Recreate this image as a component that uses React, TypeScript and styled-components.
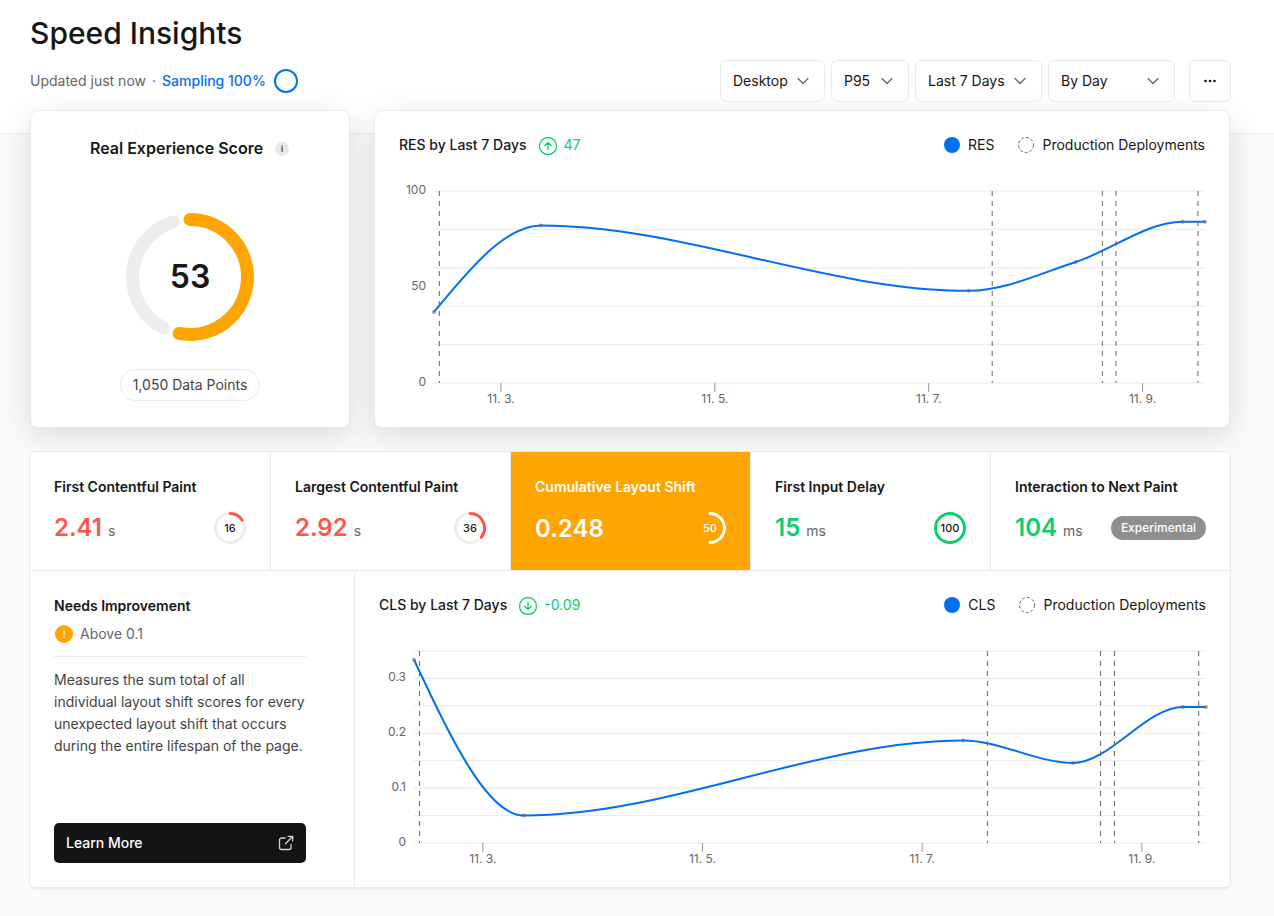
import React, { useLayoutEffect, useRef, useState } from "react";
import styled, { createGlobalStyle } from "styled-components";
import { ChevronDown } from "lucide-react";

const color = {
  text: "#171717",
  body: "#444444",
  muted: "#666666",
  line: "#eaeaea",
  track: "#ededed",
  page: "#fafafa",
  blue: "#0070f3",
  orange: "#ffa500",
  red: "#ff564a",
  green: "#0cce6b",
};

const GlobalStyle = createGlobalStyle`
  * { box-sizing: border-box; }
  body {
    margin: 0;
    background: ${color.page};
    color: ${color.text};
    font-family: Inter, "Liberation Sans", sans-serif;
    font-size: 14px;
    line-height: 20px;
    -webkit-font-smoothing: antialiased;
  }
  h1, h2, h3, p { margin: 0; }
  button, select { font: inherit; color: inherit; }
`;

/* ---------- data ---------- */

type Point = { day: number; value: number };

const SPAN_DAYS = 7.21;
const DEPLOYMENTS = [0.05, 5.22, 6.25, 6.377, 7.144];
const DATE_TICKS = [
  { day: 0.626, label: "11. 3." },
  { day: 2.626, label: "11. 5." },
  { day: 4.626, label: "11. 7." },
  { day: 6.626, label: "11. 9." },
];

const RES: Point[] = [
  { day: 0, value: 37 },
  { day: 1, value: 82 },
  { day: 5, value: 48 },
  { day: 6, value: 63 },
  { day: 7, value: 84 },
  { day: 7.21, value: 84 },
];

const CLS: Point[] = [
  { day: 0, value: 0.334 },
  { day: 1, value: 0.05 },
  { day: 5, value: 0.187 },
  { day: 6, value: 0.146 },
  { day: 7, value: 0.248 },
  { day: 7.21, value: 0.248 },
];

/* ---------- gauge ---------- */

function polar(c: number, r: number, deg: number) {
  const a = ((deg - 90) * Math.PI) / 180;
  return `${(c + r * Math.cos(a)).toFixed(2)} ${(c + r * Math.sin(a)).toFixed(2)}`;
}

function arc(c: number, r: number, from: number, to: number) {
  return `M${polar(c, r, from)}A${r} ${r} 0 ${to - from > 180 ? 1 : 0} 1 ${polar(c, r, to)}`;
}

const GaugeBox = styled.span<{ $size: number }>`
  position: relative;
  display: grid;
  place-items: center;
  flex: none;
  width: ${(p) => p.$size}px;
  height: ${(p) => p.$size}px;
  svg {
    position: absolute;
    inset: 0;
  }
`;

const GaugeValue = styled.span<{ $large?: boolean }>`
  font-size: ${(p) => (p.$large ? 32 : 11)}px;
  font-weight: ${(p) => (p.$large ? 600 : 500)};
  line-height: 1;
`;

type GaugeProps = {
  value: number;
  size: number;
  stroke: number;
  tone: string;
  track?: string;
  large?: boolean;
};

function Gauge({ value, size, stroke, tone, track = color.track, large }: GaugeProps) {
  const c = size / 2;
  const r = (size - stroke) / 2;
  const end = value * 3.6;
  const gap = 17;
  return (
    <GaugeBox $size={size}>
      <svg width={size} height={size} fill="none" strokeWidth={stroke} strokeLinecap="round" aria-hidden>
        {value >= 100 ? (
          <circle cx={c} cy={c} r={r} stroke={tone} />
        ) : (
          <>
            <path d={arc(c, r, end + gap, 360 - gap)} stroke={track} />
            <path d={arc(c, r, 0, end)} stroke={tone} />
          </>
        )}
      </svg>
      <GaugeValue $large={large}>{value}</GaugeValue>
    </GaugeBox>
  );
}

/* ---------- line chart ---------- */

function monotonePath(pts: [number, number][]) {
  const n = pts.length;
  const slope = (i: number) => (pts[i + 1][1] - pts[i][1]) / (pts[i + 1][0] - pts[i][0]);
  const m: number[] = new Array(n).fill(0);
  for (let i = 1; i < n - 1; i++) {
    const h0 = pts[i][0] - pts[i - 1][0];
    const h1 = pts[i + 1][0] - pts[i][0];
    const s0 = slope(i - 1);
    const s1 = slope(i);
    const p = (s0 * h1 + s1 * h0) / (h0 + h1);
    m[i] = (Math.sign(s0) + Math.sign(s1)) * Math.min(Math.abs(s0), Math.abs(s1), 0.5 * Math.abs(p)) || 0;
  }
  m[0] = (3 * slope(0) - m[1]) / 2;
  m[n - 1] = (3 * slope(n - 2) - m[n - 2]) / 2;
  let d = `M${pts[0][0]} ${pts[0][1]}`;
  for (let i = 0; i < n - 1; i++) {
    const [x0, y0] = pts[i];
    const [x1, y1] = pts[i + 1];
    const dx = (x1 - x0) / 3;
    d += `C${x0 + dx} ${y0 + dx * m[i]} ${x1 - dx} ${y1 - dx * m[i + 1]} ${x1} ${y1}`;
  }
  return d;
}

const ChartBox = styled.div`
  height: 228px;
  min-width: 0;
  svg {
    display: block;
    overflow: visible;
  }
`;

const AxisText = styled.text`
  font-size: 12px;
  fill: ${color.muted};
`;

type LineChartProps = {
  points: Point[];
  max: number;
  rows: number;
  labels: number[];
  title: string;
};

function LineChart({ points, max, rows, labels, title }: LineChartProps) {
  const box = useRef<HTMLDivElement>(null);
  const [width, setWidth] = useState(800);
  useLayoutEffect(() => {
    const el = box.current!;
    const measure = () => setWidth(el.clientWidth);
    measure();
    const observer = new ResizeObserver(measure);
    observer.observe(el);
    return () => observer.disconnect();
  }, []);

  const left = 35;
  const top = 16;
  const bottom = 208;
  const x = (day: number) => left + (day / SPAN_DAYS) * (width - left);
  const y = (value: number) => bottom - (value / max) * (bottom - top);
  const pts = points.map((p) => [x(p.day), y(p.value)] as [number, number]);

  return (
    <ChartBox ref={box}>
      <svg width={width} height={228} role="img" aria-label={title}>
        {Array.from({ length: rows + 1 }, (_, i) => {
          const gy = top + (i * (bottom - top)) / rows;
          return <line key={i} x1={left} x2={width} y1={gy} y2={gy} stroke={color.line} />;
        })}
        {labels.map((v) => (
          <AxisText key={v} x={left - 8} y={y(v) + 3} textAnchor="end">
            {v}
          </AxisText>
        ))}
        {DATE_TICKS.map((t) => (
          <g key={t.label}>
            <line x1={x(t.day)} x2={x(t.day)} y1={bottom} y2={bottom + 9} stroke="#999999" />
            <AxisText x={x(t.day)} y={bottom + 20} textAnchor="middle">
              {t.label}
            </AxisText>
          </g>
        ))}
        <path d={monotonePath(pts)} fill="none" stroke={color.blue} strokeWidth={2} />
        {pts.map(([px, py], i) => (
          <circle key={i} cx={px} cy={py} r={2} fill="#666666" fillOpacity={0.6} />
        ))}
        {DEPLOYMENTS.map((d) => (
          <line key={d} x1={x(d)} x2={x(d)} y1={top} y2={bottom} stroke="#666666" strokeDasharray="5 5" />
        ))}
      </svg>
    </ChartBox>
  );
}

/* ---------- chart panel ---------- */

const ChartPanel = styled.section`
  display: grid;
  gap: 20px;
  min-width: 0;
  padding: 24px;
`;

const ChartHeader = styled.header`
  display: flex;
  align-items: center;
  height: 20px;
`;

const ChartTitle = styled.h2`
  font-size: 14px;
  line-height: 20px;
  font-weight: 500;
`;

const Trend = styled.span`
  display: flex;
  align-items: center;
  gap: 6px;
  margin-left: 11px;
  color: ${color.green};
`;

const Legend = styled.ul`
  display: flex;
  gap: 24px;
  margin: 0 0 0 auto;
  padding: 0;
  list-style: none;
`;

const LegendItem = styled.li`
  display: flex;
  align-items: center;
  gap: 8px;
`;

function TrendIcon({ up }: { up: boolean }) {
  return (
    <svg width="20" height="20" viewBox="0 0 20 20" fill="none" stroke="currentColor" strokeWidth="1.3" strokeLinecap="round" strokeLinejoin="round" aria-hidden>
      <circle cx="10" cy="11" r="8.5" />
      <path d={up ? "M10 14.5V7.7M6.8 10.7 10 7.5l3.2 3.2" : "M10 7.5v6.8M6.8 11.3 10 14.5l3.2-3.2"} />
    </svg>
  );
}

type TrendChartProps = LineChartProps & { metric: string; trend: string; up: boolean };

function TrendChart({ metric, trend, up, ...chart }: TrendChartProps) {
  return (
    <>
      <ChartHeader>
        <ChartTitle>{chart.title}</ChartTitle>
        <Trend>
          <TrendIcon up={up} />
          {trend}
        </Trend>
        <Legend>
          <LegendItem>
            <svg width="16" height="16" aria-hidden>
              <circle cx="8" cy="8" r="8" fill={color.blue} />
            </svg>
            {metric}
          </LegendItem>
          <LegendItem>
            <svg width="16" height="16" aria-hidden>
              <circle cx="8" cy="8" r="7.5" fill="none" stroke="#666666" strokeDasharray="3 2" />
            </svg>
            Production Deployments
          </LegendItem>
        </Legend>
      </ChartHeader>
      <LineChart {...chart} />
    </>
  );
}

/* ---------- page header ---------- */

const Page = styled.div`
  min-height: 100vh;
  padding-bottom: 28px;
`;

const PageHeader = styled.header`
  padding: 13px 43px 31px 30px;
  background: #ffffff;
  border-bottom: 1px solid ${color.line};
`;

const PageTitle = styled.h1`
  font-size: 30px;
  line-height: 40px;
  font-weight: 500;
`;

const HeaderRow = styled.div`
  display: flex;
  align-items: center;
  justify-content: space-between;
  gap: 24px;
  margin-top: 7px;
`;

const Status = styled.div`
  display: flex;
  align-items: center;
  gap: 6px;
  color: ${color.muted};
`;

const SamplingLink = styled.a`
  display: flex;
  align-items: center;
  gap: 8px;
  color: ${color.blue};
  font-weight: 500;
  text-decoration: none;
`;

const Toolbar = styled.div`
  display: flex;
  gap: 6px;
`;

const Dropdown = styled.span<{ $width: number }>`
  position: relative;
  width: ${(p) => p.$width}px;
  svg {
    position: absolute;
    top: 11px;
    right: 12px;
    color: ${color.muted};
    pointer-events: none;
  }
`;

const Select = styled.select`
  appearance: none;
  width: 100%;
  height: 42px;
  padding: 0 12px;
  border: 1px solid ${color.line};
  border-radius: 6px;
  background: transparent;
`;

const MoreButton = styled.button`
  display: grid;
  place-items: center;
  width: 42px;
  height: 42px;
  margin-left: 8px;
  padding: 0;
  border: 1px solid ${color.line};
  border-radius: 6px;
  background: transparent;
`;

const FILTERS = [
  { name: "Device", width: 105, options: ["Desktop", "Mobile"] },
  { name: "Percentile", width: 78, options: ["P95", "P75"] },
  { name: "Period", width: 127, options: ["Last 7 Days", "Last 24 Hours"] },
  { name: "Interval", width: 127, options: ["By Day", "By Hour"] },
];

/* ---------- score ---------- */

const Main = styled.main`
  display: grid;
  gap: 24px;
  margin-top: -24px;
  padding: 0 44px 0 30px;
`;

const TopCards = styled.div`
  display: grid;
  grid-template-columns: 320px minmax(0, 1fr);
  gap: 24px;
`;

const Card = styled.div`
  border: 1px solid ${color.line};
  border-radius: 8px;
  background: #ffffff;
  box-shadow: 0 8px 30px rgba(0, 0, 0, 0.12);
`;

const ScorePanel = styled.section`
  display: flex;
  flex-direction: column;
  align-items: center;
  padding: 24px;
`;

const ScoreTitle = styled.h2`
  display: flex;
  align-items: center;
  gap: 11px;
  margin-bottom: 52px;
  font-size: 16px;
  line-height: 26px;
  font-weight: 600;
`;

const Pill = styled.span`
  margin-top: 28px;
  padding: 0 12px;
  border: 1px solid ${color.line};
  border-radius: 16px;
  line-height: 30px;
  color: ${color.body};
`;

/* ---------- vitals ---------- */

const Vitals = styled.section`
  display: grid;
  gap: 1px;
  overflow: hidden;
  border-radius: 5px;
  background: ${color.line};
  box-shadow: 0 0 0 1px ${color.line}, 0 2px 2px rgba(0, 0, 0, 0.08);
`;

const MetricRow = styled.div`
  display: grid;
  grid-template-columns: repeat(5, minmax(0, 1fr));
`;

const MetricButton = styled.button<{ $active: boolean }>`
  display: grid;
  gap: 14px;
  min-width: 0;
  padding: 24px 24px 26px;
  border: 0;
  text-align: left;
  background: ${(p) => (p.$active ? color.orange : "#ffffff")};
  background-clip: padding-box;
  color: ${(p) => (p.$active ? "#ffffff" : color.text)};
  & + & {
    border-left: 1px solid ${color.line};
  }
`;

const MetricName = styled.span`
  line-height: 22px;
  font-weight: 600;
  white-space: nowrap;
`;

const MetricBody = styled.span`
  display: flex;
  align-items: center;
  justify-content: space-between;
  height: 32px;
`;

const MetricValue = styled.span<{ $tone: string }>`
  display: flex;
  align-items: baseline;
  gap: 6px;
  padding-top: 2px;
  font-size: 24px;
  line-height: 32px;
  font-weight: 600;
  color: ${(p) => p.$tone};
`;

const Unit = styled.span`
  font-size: 14px;
  font-weight: 400;
  color: ${color.muted};
`;

const Badge = styled.span`
  padding: 0 10px;
  border-radius: 12px;
  background: #8f8f8f;
  color: #ffffff;
  font-size: 12px;
  line-height: 24px;
  font-weight: 500;
`;

type Metric = { name: string; value: string; unit?: string; score?: number; tone: string; badge?: string };

const METRICS: Metric[] = [
  { name: "First Contentful Paint", value: "2.41", unit: "s", score: 16, tone: color.red },
  { name: "Largest Contentful Paint", value: "2.92", unit: "s", score: 36, tone: color.red },
  { name: "Cumulative Layout Shift", value: "0.248", score: 50, tone: "#ffffff" },
  { name: "First Input Delay", value: "15", unit: "ms", score: 100, tone: color.green },
  { name: "Interaction to Next Paint", value: "104", unit: "ms", tone: color.green, badge: "Experimental" },
];

const DetailRow = styled.div`
  display: grid;
  grid-template-columns: 324px minmax(0, 1fr);
  gap: 1px;
  > * {
    background: #ffffff;
  }
`;

const Explainer = styled.div`
  display: flex;
  flex-direction: column;
  padding: 24px 48px 24px 24px;
`;

const ExplainerTitle = styled.h3`
  font-size: 14px;
  line-height: 22px;
  font-weight: 600;
`;

const Threshold = styled.p`
  display: flex;
  align-items: center;
  gap: 6px;
  padding: 7px 0 12px;
  border-bottom: 1px solid ${color.line};
  color: ${color.muted};
`;

const Description = styled.p`
  margin-top: 12px;
  line-height: 22px;
  color: ${color.body};
`;

const LearnMore = styled.a`
  display: flex;
  align-items: center;
  justify-content: space-between;
  height: 40px;
  margin-top: auto;
  padding: 0 12px;
  border-radius: 5px;
  background: #141414;
  color: #ffffff;
  font-weight: 500;
  text-decoration: none;
`;

export default function App() {
  const active = "Cumulative Layout Shift";
  return (
    <>
      <GlobalStyle />
      <Page>
        <PageHeader>
          <PageTitle>Speed Insights</PageTitle>
          <HeaderRow>
            <Status>
              <span>Updated just now</span>
              <span>·</span>
              <SamplingLink href="#sampling">
                Sampling 100%
                <svg width="24" height="24" fill="none" aria-hidden>
                  <circle cx="12" cy="12" r="11" stroke={color.blue} strokeWidth="2" />
                </svg>
              </SamplingLink>
            </Status>
            <Toolbar>
              {FILTERS.map((f) => (
                <Dropdown key={f.name} $width={f.width}>
                  <Select aria-label={f.name}>
                    {f.options.map((o) => (
                      <option key={o}>{o}</option>
                    ))}
                  </Select>
                  <ChevronDown size={20} strokeWidth={1.5} />
                </Dropdown>
              ))}
              <MoreButton aria-label="More options">
                <svg width="16" height="16" fill={color.text} aria-hidden>
                  <circle cx="3.5" cy="8" r="1.3" />
                  <circle cx="8" cy="8" r="1.3" />
                  <circle cx="12.5" cy="8" r="1.3" />
                </svg>
              </MoreButton>
            </Toolbar>
          </HeaderRow>
        </PageHeader>

        <Main>
          <TopCards>
            <Card as={ScorePanel}>
              <ScoreTitle>
                Real Experience Score
                <svg width="16" height="16" aria-hidden>
                  <circle cx="8" cy="9" r="7" fill="#e8e8e8" />
                  <path d="M7 8.2h1.2V12M8.2 5.6v1.4" fill="none" stroke="#666666" strokeWidth="1.4" />
                </svg>
              </ScoreTitle>
              <Gauge value={53} size={128} stroke={13} tone={color.orange} large />
              <Pill>1,050 Data Points</Pill>
            </Card>
            <Card as={ChartPanel}>
              <TrendChart metric="RES" trend="47" up title="RES by Last 7 Days" points={RES} max={100} rows={5} labels={[0, 50, 100]} />
            </Card>
          </TopCards>

          <Vitals>
            <MetricRow>
              {METRICS.map((m) => {
                const isActive = m.name === active;
                return (
                  <MetricButton key={m.name} $active={isActive} aria-pressed={isActive}>
                    <MetricName>{m.name}</MetricName>
                    <MetricBody>
                      <MetricValue $tone={m.tone}>
                        {m.value}
                        {m.unit && <Unit>{m.unit}</Unit>}
                      </MetricValue>
                      {m.score !== undefined && (
                        <Gauge value={m.score} size={32} stroke={3} tone={m.tone} track={isActive ? "transparent" : color.track} />
                      )}
                      {m.badge && <Badge>{m.badge}</Badge>}
                    </MetricBody>
                  </MetricButton>
                );
              })}
            </MetricRow>
            <DetailRow>
              <Explainer>
                <ExplainerTitle>Needs Improvement</ExplainerTitle>
                <Threshold>
                  <svg width="20" height="20" aria-hidden>
                    <circle cx="10" cy="10" r="9" fill={color.orange} />
                    <path d="M10 6.5v4.6M10 12.6v1.2" stroke="#ffffff" strokeWidth="1.3" />
                  </svg>
                  Above 0.1
                </Threshold>
                <Description>
                  Measures the sum total of all individual layout shift scores for every unexpected layout shift that
                  occurs during the entire lifespan of the page.
                </Description>
                <LearnMore href="#learn-more">
                  Learn More
                  <svg width="16" height="16" viewBox="0 0 16 16" fill="none" stroke="#d4d4d4" strokeWidth="1.3" strokeLinecap="round" strokeLinejoin="round" aria-hidden>
                    <path d="M7 3H3.5A2 2 0 0 0 1.5 5v7.5a2 2 0 0 0 2 2H11a2 2 0 0 0 2-2V9.5M10 1.3h4.7V6M14.5 1.5 7.5 8.8" />
                  </svg>
                </LearnMore>
              </Explainer>
              <ChartPanel>
                <TrendChart metric="CLS" trend="-0.09" up={false} title="CLS by Last 7 Days" points={CLS} max={0.35} rows={7} labels={[0, 0.1, 0.2, 0.3]} />
              </ChartPanel>
            </DetailRow>
          </Vitals>
        </Main>
      </Page>
    </>
  );
}
